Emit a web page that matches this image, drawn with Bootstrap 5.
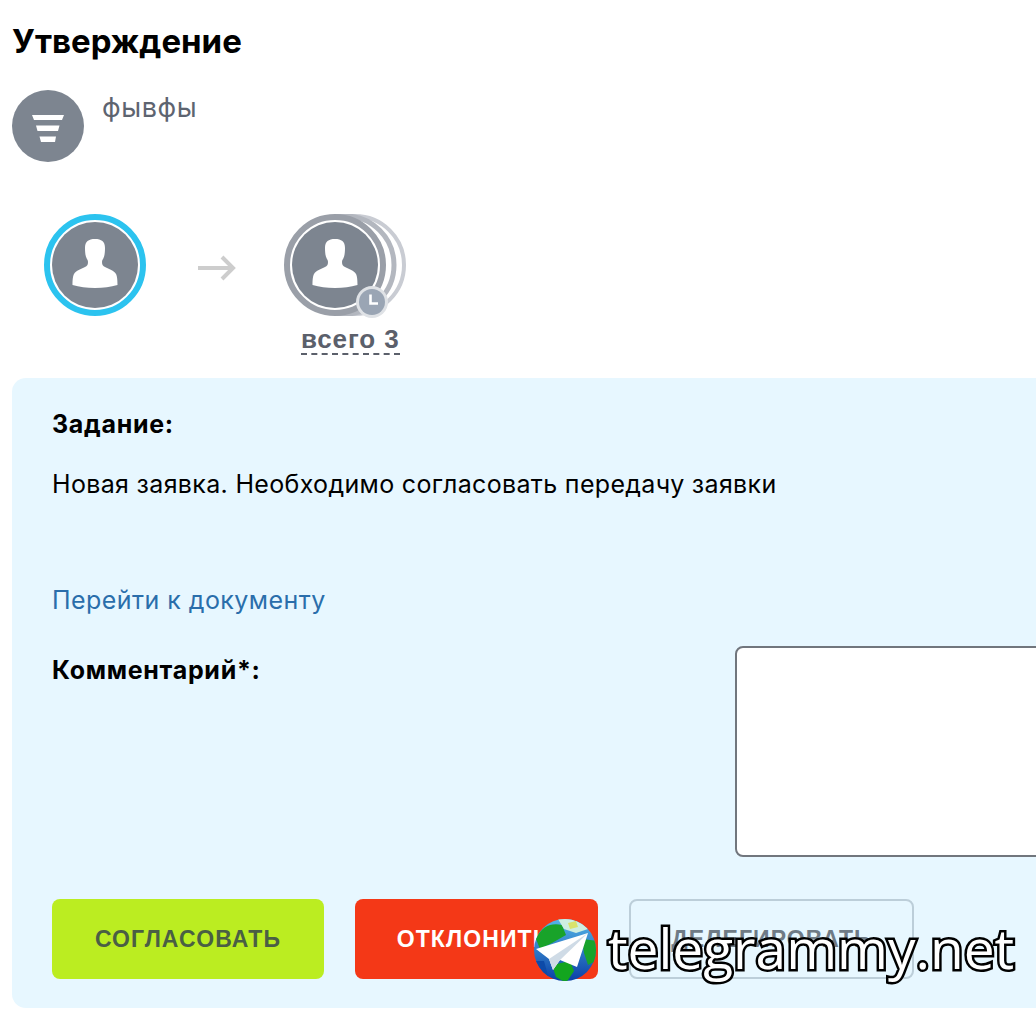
<!DOCTYPE html>
<html lang="ru">
<head>
<meta charset="UTF-8">
<meta name="viewport" content="width=device-width, initial-scale=1.0">
<title>Утверждение</title>
<link href="https://cdn.jsdelivr.net/npm/bootstrap@5.3.0/dist/css/bootstrap.min.css" rel="stylesheet">
<style>
html, body { height: 1010px; overflow: hidden; }
body { font-family: Inter, "Noto Sans", sans-serif; background: #fff; color: #000; position: relative; padding: 0 0 0 12px; }
.page-title { font-size: 33px; font-weight: 700; line-height: 38px; margin: 0; padding-top: 22px; }
.process-row { margin-top: 30px; height: 72px; }
.process-ava { width: 72px; height: 72px; border-radius: 50%; background: #7d8590; flex: none; padding-top: 4px; }
.process-name { font-size: 27px; line-height: 30px; color: #5d6470; margin: 3px 0 0 18px; letter-spacing: .6px; }
.route { margin: 52px 0 0 32px; height: 140px; }
.step { width: 102px; height: 102px; position: relative; flex: none; }
.step svg { display: block; }
.arrow-box { width: 138px; height: 102px; padding: 6px 0 0 4px; }
.stack-box { width: 122px; flex: none; }
.clock-badge { position: absolute; left: 72px; top: 72px; }
.total-link { font-size: 26px; font-weight: 700; line-height: 28px; color: #5b606b; border-bottom: 2px dashed #5b606b; display: inline-block; margin-left: 17px; margin-top: 9px; font-family: "Liberation Sans", sans-serif; letter-spacing: .9px; }
.task-panel { width: 1100px; height: 630px; background: #e7f7ff; border-radius: 14px; margin-top: 24px; padding: 30px 40px 0; }
.task-label { font-size: 25px; font-weight: 700; line-height: 32px; letter-spacing: .7px; }
.task-text { font-size: 25px; line-height: 32px; margin-top: 28px; letter-spacing: .33px; }
.doc-link { font-size: 25px; line-height: 32px; color: #2a6eab; text-decoration: none; display: block; margin-top: 84px; letter-spacing: .45px; }
.comment-row { margin-top: 30px; }
.comment-label { width: 683px; flex: none; padding-top: 8px; }
.comment-box { width: 400px; height: 211px; border: 2px solid #71767d; border-radius: 8px; background: #fff; resize: none; display: block; }
.action-row { margin-top: 42px; gap: 31px; }
.act-btn { height: 80px; border-radius: 8px; font-family: "Liberation Sans", sans-serif; font-size: 23px; font-weight: 700; text-transform: uppercase; border: 0; padding: 0; letter-spacing: 1.100px; }
.act-ok { width: 272px; background: #bbed21; color: #4a5f44; }
.act-no { width: 243px; background: #f43817; color: #fff; padding-right: 6px; }
.act-del { width: 285px; background: transparent; border: 2px solid #bcced9; color: #6f7b86; }
.act-ok:hover { background: #bbed21; color: #4a5f44; }
.act-no:hover { background: #f43817; color: #fff; }
.wm { position: absolute; left: 532px; top: 917px; display: flex; align-items: center; gap: 10px; }
.wm-text { font-family: "Open Sans", sans-serif; font-size: 55px; line-height: 62px; color: #fff; -webkit-text-stroke: 5px #000; paint-order: stroke fill; margin-top: -4px; }
</style>
</head>
<body>
<h1 class="page-title">Утверждение</h1>

<div class="process-row d-flex">
  <div class="process-ava d-flex align-items-center justify-content-center">
    <svg width="32" height="27" viewBox="0 0 32 27"><path d="M0 0H32L30 5H2Z M4 10.500H27.500L26 16H5.500Z M7.500 21.500H24L23 27H9Z" fill="#fff"/></svg>
  </div>
  <div class="process-name">фывфы</div>
</div>

<div class="route d-flex">
  <div class="step">
    <svg width="102" height="102" viewBox="0 0 102 102">
      <circle cx="51" cy="51" r="48" fill="none" stroke="#2cc3ef" stroke-width="6"/>
      <circle cx="51" cy="51" r="44" fill="#fff"/>
      <circle cx="51" cy="51" r="43" fill="#7d8590"/>
      <path d="M51 25c-6.500 0-10 2.500-10 9 0 5 .5 8 1.500 10 .5 1.500 1.500 2 1.500 4 0 3-1 4-3 5-4 2-9 3.500-11 7-1 2-1.500 5-1.500 11 7 2 14 3 22.500 3s15.500-1 22.500-3c0-6-.5-9-1.500-11-2-3.500-7-5-11-7-2-1-3-2-3-5 0-2 1-2.500 1.500-4 1-2 1.500-5 1.500-10 0-6.500-3.500-9-10-9z" fill="#fff"/>
    </svg>
  </div>
  <div class="arrow-box d-flex align-items-center justify-content-center">
    <svg width="40" height="28" viewBox="0 0 40 28"><path d="M1 14H36M25 3L36 14L25 25" fill="none" stroke="#cdcdcd" stroke-width="4"/></svg>
  </div>
  <div class="stack-box">
    <div class="step">
      <svg width="124" height="102" viewBox="0 0 124 102">
        <circle cx="71" cy="51" r="49" fill="#fff" stroke="#c9ccd3" stroke-width="4"/>
        <circle cx="61" cy="51" r="49" fill="#fff" stroke="#b3b7bf" stroke-width="5"/>
        <circle cx="51" cy="51" r="48" fill="#fff" stroke="#9a9fa8" stroke-width="6"/>
        <circle cx="51" cy="51" r="43" fill="#7d8590"/>
        <path d="M51 25c-6.500 0-10 2.500-10 9 0 5 .5 8 1.500 10 .5 1.500 1.500 2 1.500 4 0 3-1 4-3 5-4 2-9 3.500-11 7-1 2-1.500 5-1.500 11 7 2 14 3 22.500 3s15.500-1 22.500-3c0-6-.5-9-1.500-11-2-3.500-7-5-11-7-2-1-3-2-3-5 0-2 1-2.500 1.500-4 1-2 1.500-5 1.500-10 0-6.500-3.500-9-10-9z" fill="#fff"/>
      </svg>
      <svg class="clock-badge" width="32" height="32" viewBox="0 0 32 32">
        <circle cx="16" cy="16" r="16" fill="#dfe2e6"/>
        <circle cx="16" cy="16" r="13" fill="#9aa5b4"/>
        <path d="M14.500 8.500V17.500H22" fill="none" stroke="#fff" stroke-width="2.600"/>
      </svg>
    </div>
    <span class="total-link">всего 3</span>
  </div>
</div>

<div class="task-panel">
  <div class="task-label">Задание:</div>
  <div class="task-text">Новая заявка. Необходимо согласовать передачу заявки</div>
  <a class="doc-link" href="#">Перейти к документу</a>
  <div class="comment-row d-flex">
    <div class="comment-label task-label">Комментарий*:</div>
    <textarea class="comment-box" aria-label="Комментарий"></textarea>
  </div>
  <div class="action-row d-flex">
    <button type="button" class="btn act-btn act-ok">Согласовать</button>
    <button type="button" class="btn act-btn act-no">Отклонить</button>
    <button type="button" class="btn act-btn act-del">Делегировать</button>
  </div>
</div>

<div class="wm">
  <svg width="66" height="66" viewBox="0 0 66 66">
    <defs>
      <clipPath id="globe"><circle cx="33" cy="33" r="31"/></clipPath>
      <linearGradient id="sea" x1="0" y1="0" x2="0" y2="1"><stop offset="0" stop-color="#55b6e8"/><stop offset="1" stop-color="#0a3fa6"/></linearGradient>
    </defs>
    <circle cx="33" cy="33" r="31" fill="url(#sea)"/>
    <g clip-path="url(#globe)">
      <path d="M4 22C10 8 20 6 30 8L34 18 20 26 8 32Z" fill="#19a32a"/>
      <path d="M26 2C38 0 50 5 56 12L44 16 32 12Z" fill="#cfeee0"/>
      <path d="M36 6L44 4 46 10 38 12Z" fill="#d9e36b"/>
      <path d="M50 22L66 24 64 44 56 48 52 36Z" fill="#18a32b"/>
      <path d="M20 48L38 44 42 54 34 66 24 60Z" fill="#13a51f"/>
      <path d="M2 44L12 44 18 66 4 60Z" fill="#0d4aa8"/>
    </g>
    <path d="M4 32L56 16 45 50 28 43 21 53 17 42Z" fill="#fff"/>
    <path d="M17 42L56 16 28 43 21 53Z" fill="#cfdbe6"/>
  </svg>
  <span class="wm-text">telegrammy.net</span>
</div>
<script src="https://cdn.jsdelivr.net/npm/bootstrap@5.3.0/dist/js/bootstrap.bundle.min.js"></script>
</body>
</html>
